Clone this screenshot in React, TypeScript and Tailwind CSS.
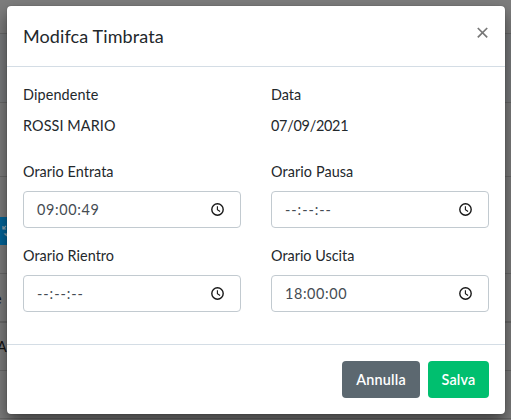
import type { ReactNode } from 'react';

function Clock() {
  return (
    <svg width="13" height="13" viewBox="0 0 13 13" fill="none" stroke="#171717" className="shrink-0">
      <circle cx="6.5" cy="6.5" r="5.7" strokeWidth="1.4" />
      <path d="M6.4 3.2v3.5l2.7 1.8" strokeWidth="1.1" />
    </svg>
  );
}

function TimeField({ label, labelClass, value, valueClass }: { label: string; labelClass: string; value: string; valueClass: string }) {
  return (
    <div className="h-[84px] w-[218px]">
      <div className={`h-[30px] pt-px text-[14.4px] leading-[20px] whitespace-nowrap ${labelClass}`}>{label}</div>
      <div className="flex h-[37px] items-center justify-between rounded-[4px] border border-[#c2cad0] pr-[16px] pl-[13px]">
        <span className={`text-[14.4px] leading-[20px] whitespace-nowrap text-[#454c53] ${valueClass}`}>{value}</span>
        <Clock />
      </div>
    </div>
  );
}

function Row({ className, children }: { className: string; children?: ReactNode }) {
  return <div className={`shrink-0 border-b border-[#696969] ${className}`}>{children}</div>;
}

export default function App() {
  return (
    <div className="relative h-[420px] w-[511px] overflow-hidden bg-[#7d7d7d] font-['Lato','Open_Sans',sans-serif] text-[#23282c]">
      <div className="flex h-full flex-col text-[14.4px] text-[#111]">
        <Row className="h-[34px]" />
        <Row className="h-[69px] bg-[#797b7d]" />
        <Row className="h-[74px]" />
        <Row className="flex h-[97px] pt-[40px]">
          <div className="h-[28px] w-[10px] bg-[#01659a]">
            <svg width="7" height="28" viewBox="0 0 7 28" fill="none" stroke="#91a9b5" strokeWidth="1.2">
              <path d="M3 9v3h3M3 12l3-3M7 17H5l2 2" />
            </svg>
          </div>
        </Row>
        <Row className="h-[49px] border-b-2 pt-[14px]"><span className="-ml-[6px]">e</span></Row>
        <Row className="h-[48px] pt-[13px]"><span className="-ml-[3px]">A</span></Row>
        <Row className="h-[48px]" />
      </div>
      <section className="absolute top-[6px] left-[7px] flex h-[408px] w-[498px] flex-col rounded-[4px] bg-white shadow-[0_8px_16px_rgba(0,0,0,0.5),0_0_1px_rgba(0,0,0,0.5)]">
        <header className="flex h-[61px] shrink-0 justify-between border-b border-[#d4dde5] px-[16px]">
          <h1 className="pt-[18px] text-[18px] leading-[24px] tracking-[0.11px] whitespace-nowrap">Modifca Timbrata</h1>
          <svg width="13" height="13" viewBox="0 0 13 13" className="mt-[20px]" fill="none" stroke="#777" strokeWidth="1.7">
            <path d="M1.8 2l9.4 9.4M11.2 2L1.8 11.4" />
          </svg>
        </header>
        <div className="flex h-[277px] shrink-0 flex-col px-[16px] pt-[17px]">
          <div className="grid h-[77px] grid-cols-[218px_218px] gap-x-[30px] pt-px text-[14.4px] leading-[20px]">
            <div className="flex flex-col gap-[11px]">
              <span className="tracking-[0.12px]">Dipendente</span>
              <span className="tracking-[0.1px]">ROSSI MARIO</span>
            </div>
            <div className="flex flex-col gap-[11px]">
              <span>Data</span>
              <span className="tracking-[-0.25px]">07/09/2021</span>
            </div>
          </div>
          <div className="grid grid-cols-[218px_218px] gap-x-[30px]">
            <TimeField label="Orario Entrata" labelClass="tracking-[0.05px]" value="09:00:49" valueClass="tracking-[0.65px]" />
            <TimeField label="Orario Pausa" labelClass="tracking-[0.1px]" value="--:--:--" valueClass="tracking-[0.95px]" />
            <TimeField label="Orario Rientro" labelClass="tracking-[0.05px]" value="--:--:--" valueClass="tracking-[0.95px]" />
            <TimeField label="Orario Uscita" labelClass="" value="18:00:00" valueClass="tracking-[0.6px]" />
          </div>
        </div>
        <footer className="flex flex-1 justify-end gap-[8px] border-t border-[#d4dde5] px-[16px] pt-[16px] text-[14.4px] tracking-[0.2px] font-semibold text-white">
          <button className="h-[37px] w-[78px] rounded-[4px] bg-[#5c6870]">Annulla</button>
          <button className="h-[37px] w-[61px] rounded-[4px] bg-[#00bf6f]">Salva</button>
        </footer>
      </section>
    </div>
  );
}
